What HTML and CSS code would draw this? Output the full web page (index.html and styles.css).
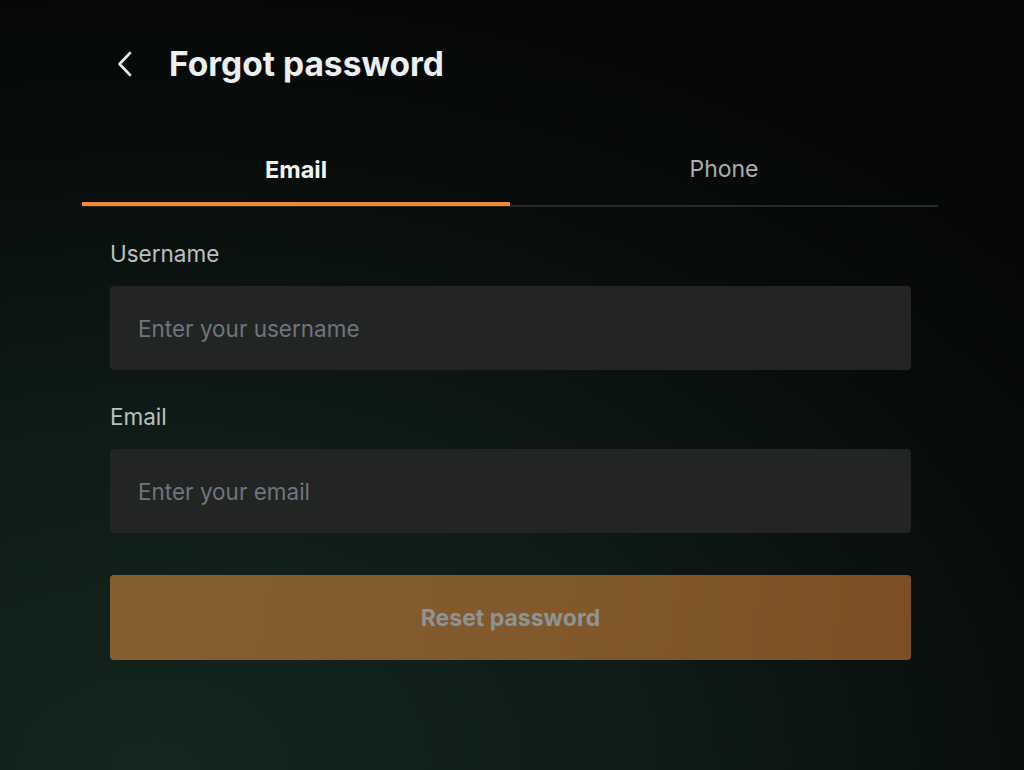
FILE: index.html
```html
<!DOCTYPE html>
<html lang="en">
<head>
<meta charset="utf-8">
<title>Forgot password</title>
<link rel="stylesheet" href="styles.css">
</head>
<body>
<main class="page">
  <header class="header">
    <button class="back" aria-label="Back">
      <svg width="16" height="26" viewBox="0 0 16 26"><path d="M13 2 L2.5 13 L13 24" fill="none" stroke="#e8ecec" stroke-width="2.6" stroke-linecap="round" stroke-linejoin="round"/></svg>
    </button>
    <h1 class="title">Forgot password</h1>
  </header>
  <nav class="tabs">
    <div class="tab active">Email</div>
    <div class="tab">Phone</div>
  </nav>
  <form class="form">
    <label class="field">
      <span class="label">Username</span>
      <input class="input" type="text" placeholder="Enter your username">
    </label>
    <label class="field">
      <span class="label">Email</span>
      <input class="input" type="email" placeholder="Enter your email">
    </label>
    <button type="button" class="submit">Reset password</button>
  </form>
</main>
</body>
</html>
```

FILE: styles.css
```css
html, body {
  margin: 0;
  height: 100%;
}
body {
  font-family: Inter, "Liberation Sans", Arial, sans-serif;
  background: radial-gradient(ellipse 110% 100% at 15% 100%, #13261f 0%, #0e1b17 45%, #070b0a 85%, #050807 100%);
  color: #e8ecec;
  overflow: hidden;
}
.page {
  width: 856px;
  margin: 0 auto 0 82px;
  padding-top: 44px;
}
.header {
  display: flex;
  align-items: center;
  padding-left: 35px;
  height: 40px;
}
.back {
  background: none;
  border: 0;
  padding: 0;
  margin: 0 34px 0 0;
  width: 18px;
  height: 26px;
  display: flex;
  align-items: center;
  cursor: pointer;
}
.title {
  margin: 0;
  font-size: 33.5px;
  line-height: 40px;
  font-weight: 700;
  color: #eceff0;
  letter-spacing: 0;
}
.tabs {
  display: flex;
  margin-top: 72px;
  border-bottom: 2px solid #262b29;
}
.tab {
  flex: 1;
  text-align: center;
  font-size: 23px;
  line-height: 27px;
  color: #a9b0b4;
  height: 49px;
  position: relative;
}
.tab.active {
  color: #f3f5f5;
  font-weight: 700;
  font-size: 23.5px;
}
.tab.active::after {
  content: "";
  position: absolute;
  left: 0;
  right: 0;
  bottom: -1px;
  height: 4px;
  background: #f0892f;
}
.form {
  padding: 35px 27px 0 28px;
  display: flex;
  flex-direction: column;
}
.field {
  display: flex;
  flex-direction: column;
  margin-bottom: 35px;
}
.label {
  font-size: 22.5px;
  color: #b9c0c2;
  line-height: 24px;
  margin-bottom: 20px;
}
.input {
  height: 84px;
  box-sizing: border-box;
  border: 0;
  border-radius: 4px;
  background: #232424;
  padding: 0 28px;
  font-family: Inter, "Liberation Sans", Arial, sans-serif;
  font-size: 22.5px;
  color: #e8ecec;
  outline: none;
}
.input::placeholder {
  color: #6d767d;
}
.submit {
  margin-top: 7px;
  height: 85px;
  border: 0;
  border-radius: 4px;
  background: linear-gradient(100deg, #875e30 0%, #82592d 50%, #7b4f25 100%);
  color: #8d9494;
  font-family: Inter, "Liberation Sans", Arial, sans-serif;
  font-size: 23px;
  font-weight: 700;
}
```
